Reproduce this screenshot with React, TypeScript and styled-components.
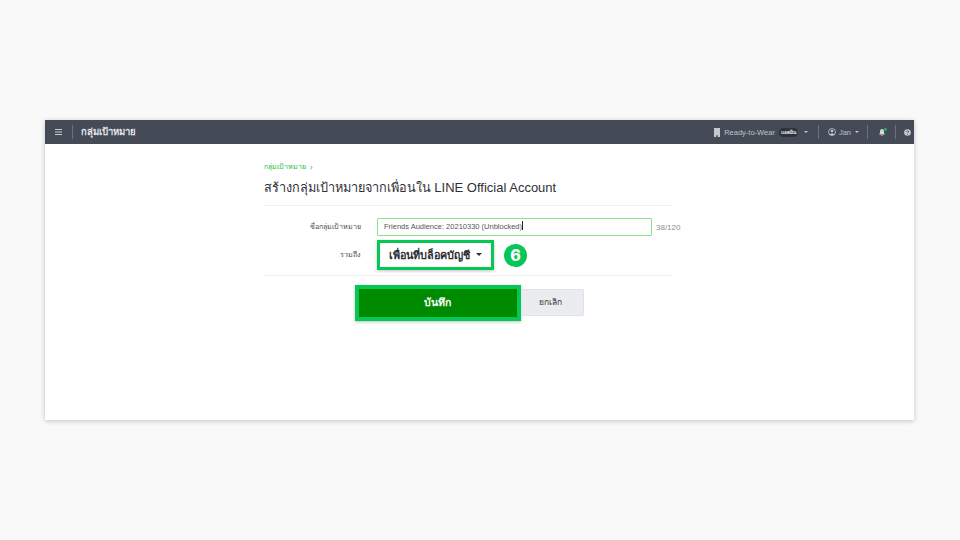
import React from "react";
import styled, { createGlobalStyle } from "styled-components";

const Global = createGlobalStyle`
  html, body { margin: 0; padding: 0; width: 960px; height: 540px; overflow: hidden; background: #f9f9f9; }
  body { font-family: "Liberation Sans", "Noto Sans", sans-serif; }
`;
const thai = `"Noto Sans", "Liberation Sans", sans-serif`;
const Page = styled.div`
  width: 960px; height: 540px; box-sizing: border-box; padding: 120px 46px 0 45px;
`;
const Win = styled.div`
  width: 869px; height: 300px; background: #fff; box-shadow: 0 1px 5px rgba(0,0,0,.22);
  display: flex; flex-direction: column;
`;
const TopBar = styled.header`
  height: 24px; background: #454a57; display: flex; align-items: center; color: #d5d7db; flex: none;
`;
const Burger = styled.div`
  width: 27px; display: flex; justify-content: center;
`;
const Sep = styled.span<{ $l?: number; $r?: number }>`
  width: 1px; height: 14px; background: #6c717c; flex: none;
  margin: 0 ${p => p.$r ?? 0}px 0 ${p => p.$l ?? 0}px;
`;
const BarTitle = styled.span`
  font-family: ${thai}; font-size: 9.5px; font-weight: 600; color: #e4e5e8; margin-left: 8px; padding-bottom: 2px; white-space: nowrap;
`;
const Spacer = styled.div` flex: 1; `;
const BarText = styled.span<{ $l?: number }>`
  font-family: "Liberation Sans", sans-serif; font-size: 7.5px; color: #bfc2c7; white-space: nowrap;
  margin-left: ${p => p.$l ?? 0}px;
`;
const Chip = styled.span`
  font-family: ${thai}; font-size: 5px; font-weight: 700; color: #e8e9eb; background: #2e323c;
  border-radius: 5px; padding: 0 2px; height: 9px; line-height: 9px; margin: 0 2px 0 4px; white-space: nowrap;
`;
const Caret = styled.span<{ $l?: number }>`
  width: 0; height: 0; border-left: 2px solid transparent; border-right: 2px solid transparent;
  border-top: 2px solid #c5c8cc; margin-left: ${p => p.$l ?? 2}px; flex: none;
`;
const Content = styled.main`
  width: 409px; margin-left: 219px; display: flex; flex-direction: column;
`;
const Crumb = styled.div`
  margin-top: 17px; height: 11px; font-family: ${thai}; font-size: 7.2px; font-weight: 500; line-height: 11px; color: #27c13a;
  display: flex; align-items: center; gap: 4px;
`;
const CrumbArrow = styled.span` color: #999; font-size: 8px; `;
const Title = styled.h1`
  margin: 4px 0 0; font-family: ${thai}; font-weight: 400; font-size: 12.7px; line-height: 22px; color: #2f3136;
  height: 22px; white-space: nowrap;
  & > b { font-family: "Liberation Sans", sans-serif; font-weight: 400; font-size: 13px; }
`;
const Rule = styled.hr<{ $t?: number }>`
  border: 0; height: 1px; background: #eff0f1; margin: ${p => p.$t ?? 7}px 0 0; width: 100%; flex: none;
`;
const Row = styled.div`
  display: flex; align-items: center; flex: none;
`;
const NameRow = styled(Row)` margin-top: 12px; height: 18px; `;
const SelectRow = styled(Row)` margin-top: 4px; height: 30px; `;
const Label = styled.label`
  width: 97px; text-align: right; font-family: ${thai}; font-size: 7.2px; font-weight: 500; color: #4c4f55;
  margin-right: 16px; padding-bottom: 2px; flex: none; white-space: nowrap;
`;
const Input = styled.div`
  width: 275px; height: 18px; box-sizing: border-box; border: 1px solid #8fe08a; border-radius: 1px;
  font-size: 7.5px; line-height: 16px; padding-left: 6px; color: #555; flex: none; white-space: nowrap;
  & > i { display: inline-block; width: 1px; height: 9px; background: #222; vertical-align: -1px; }
`;
const Count = styled.span`
  font-size: 8px; color: #8a8d93; margin-left: 4px; white-space: nowrap;
`;
const Highlight = styled.div`
  width: 117px; height: 30px; box-sizing: border-box; border: 3.5px solid #06c755; background: #fff;
  display: flex; align-items: center; justify-content: center; gap: 6px; box-shadow: 0 1px 3px rgba(0,0,0,.25);
  font-family: ${thai}; font-weight: 700; font-size: 10.8px; color: #2c2e33; white-space: nowrap; flex: none;
`;
const BigCaret = styled.span`
  width: 0; height: 0; border-left: 3.5px solid transparent; border-right: 3.5px solid transparent;
  border-top: 3.5px solid #2c2e33; margin-bottom: 2px;
`;
const Step = styled.span`
  width: 23px; height: 23px; border-radius: 50%; background: #06c755; color: #fff; margin-left: 10px;
  font-family: Inter, "Liberation Sans", sans-serif; font-weight: 800; font-size: 16px; line-height: 23px; text-align: center; flex: none;
`;
const Actions = styled.div`
  margin: 9px 0 0 91px; display: flex; align-items: center;
`;
const Save = styled.button`
  width: 166px; height: 36px; box-sizing: border-box; border: 4px solid #06c755; background: #008a00; color: #fff;
  font-family: ${thai}; font-weight: 700; font-size: 10.5px; line-height: 24px; padding: 0 2px 3px 0; box-shadow: 0 1px 3px rgba(0,0,0,.25);
`;
const Cancel = styled.button`
  width: 63px; height: 27px; box-sizing: border-box; border: 1px solid #e2e3e7; background: #ebecf0; color: #33353a;
  font-family: ${thai}; font-weight: 500; font-size: 8.5px; padding: 0 5px 2px 0; border-radius: 1px; margin-bottom: 1px;
`;
const Ico = styled.svg<{ $l?: number; $r?: number }>`
  flex: none; display: block; margin-left: ${p => p.$l ?? 0}px; margin-right: ${p => p.$r ?? 0}px;
`;

export default function App() {
  return (
    <>
      <Global />
      <Page>
        <Win>
          <TopBar>
            <Burger>
              <Ico width="7" height="6" viewBox="0 0 7 6">
                <path d="M0 .5h7M0 3h7M0 5.5h7" stroke="#c8cacf" strokeWidth="1" />
              </Ico>
            </Burger>
            <Sep />
            <BarTitle>กลุ่มเป้าหมาย</BarTitle>
            <Spacer />
            <Ico width="6" height="9" viewBox="0 0 6 9">
              <path d="M0 0h6v9H3.8V7.2H2.2V9H0z" fill="#c5c8cc" />
            </Ico>
            <BarText $l={4}>Ready-to-Wear</BarText>
            <Chip>แอดมิน</Chip>
            <Caret $l={4} />
            <Sep $l={10} $r={9} />
            <Ico width="8" height="8" viewBox="0 0 8 8">
              <circle cx="4" cy="4" r="3.5" fill="none" stroke="#c5c8cc" strokeWidth=".8" />
              <circle cx="4" cy="3" r="1.3" fill="#c5c8cc" />
              <path d="M1.7 6.4C2.3 5.1 5.7 5.1 6.3 6.4 5 7.6 3 7.6 1.7 6.4z" fill="#c5c8cc" />
            </Ico>
            <BarText $l={3}>Jan</BarText>
            <Caret $l={4} />
            <Sep $l={8} $r={10} />
            <Ico width="9" height="9" viewBox="0 0 9 9">
              <path d="M4 1C2.4 1 2 2.4 2 4c0 1.4-.6 2-1 2.6h6C6.6 6 6 5.4 6 4c0-1.6-.4-3-2-3zM3 7.2h2L4 8.3z" fill="#d5d7db" />
              <circle cx="7.4" cy="1.4" r="1.3" fill="#17c950" />
            </Ico>
            <Sep $l={8} $r={8} />
            <Ico width="7" height="7" viewBox="0 0 7 7" $r={3}>
              <circle cx="3.5" cy="3.5" r="3.3" fill="#c8cacf" />
              <path d="M2.4 2.8c0-1.4 2.2-1.4 2.2 0 0 .8-1.1.8-1.1 1.5" fill="none" stroke="#454a57" strokeWidth=".8" />
              <rect x="3.1" y="4.9" width=".8" height=".8" fill="#454a57" />
            </Ico>
          </TopBar>
          <Content>
            <Crumb>กลุ่มเป้าหมาย <CrumbArrow>›</CrumbArrow></Crumb>
            <Title>สร้างกลุ่มเป้าหมายจากเพื่อนใน <b>LINE Official Account</b></Title>
            <Rule />
            <NameRow>
              <Label>ชื่อกลุ่มเป้าหมาย</Label>
              <Input>Friends Audience: 20210330 (Unblocked)<i /></Input>
              <Count>38/120</Count>
            </NameRow>
            <SelectRow>
              <Label>รวมถึง</Label>
              <Highlight>เพื่อนที่บล็อคบัญชี <BigCaret /></Highlight>
              <Step>6</Step>
            </SelectRow>
            <Rule $t={5} />
            <Actions>
              <Save>บันทึก</Save>
              <Cancel>ยกเลิก</Cancel>
            </Actions>
          </Content>
        </Win>
      </Page>
    </>
  );
}
